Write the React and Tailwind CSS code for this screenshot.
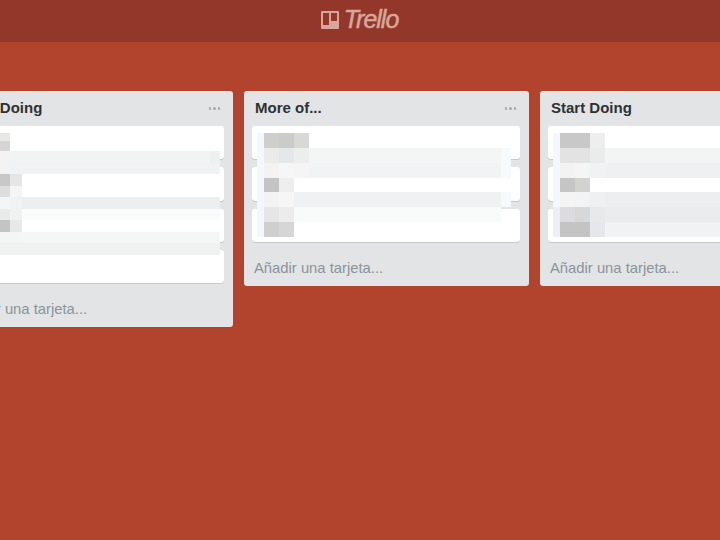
const keepRows = [
  ["h-[8px]", ["w-[10px] bg-[#e8e8e7]"]],
  ["h-[10px]", ["w-[10px] bg-[#d5d5d3]"]],
  ["h-[12px]", ["w-[10px] bg-[#f3f3f3]", "w-[200px] bg-[#f2f3f3]", "w-[10px] bg-[#eef0f0]"]],
  ["h-[11px]", ["w-[10px] bg-[#f3f3f3]", "w-[210px] bg-[#f0f2f3]"]],
  ["h-[12px]", ["w-[10px] bg-[#c8c8c8]", "w-[12px] bg-[#e5e5e5]"]],
  ["h-[11px]", ["w-[10px] bg-[#dddddd]", "w-[12px] bg-[#f5f5f5]"]],
  ["h-[12px]", ["w-[10px] bg-[#f3f5f7]", "w-[12px] bg-[#f0f2f4]", "w-[198px] bg-[#eceef0]"]],
  ["h-[11px]", ["w-[10px] bg-[#e9ebea]", "w-[12px] bg-[#f0f2f1]", "w-[198px] bg-[#fafbfb]"]],
  ["h-[12px]", ["w-[10px] bg-[#c4c4c4]", "w-[12px] bg-[#e8e8e8]"]],
  ["h-[11px]", ["w-[22px] bg-[#f4f5f5]", "w-[198px] bg-[#f5f6f6]"]],
  ["h-[12px]", ["w-[220px] bg-[#f0f1f1]"]],
];

const moreRows = [
  ["w-[7px] bg-[#f2f8fb]", "w-[15px] bg-[#cfcecd]", "w-[15px] bg-[#cbcbca]", "w-[15px] bg-[#d8d8d6]"],
  ["w-[7px] bg-[#f2f8fb]", "w-[15px] bg-[#ebebea]", "w-[15px] bg-[#e4e8ea]", "w-[15px] bg-[#ebeeed]", "w-[192px] bg-[#f4f5f5]", "w-[10px] bg-[#f5fafc]"],
  ["w-[7px] bg-[#f2f8fb]", "w-[15px] bg-[#f3f3f3]", "w-[15px] bg-[#f6f6f6]", "w-[15px] bg-[#f5f5f5]", "w-[192px] bg-[#f2f3f4]", "w-[10px] bg-[#f5fafc]"],
  ["w-[7px] bg-[#f2f8fb]", "w-[15px] bg-[#c4c4c4]", "w-[15px] bg-[#eeeeee]"],
  ["w-[7px] bg-[#f2f8fb]", "w-[15px] bg-[#f3f3f3]", "w-[15px] bg-[#f6f6f6]", "w-[207px] bg-[#eff1f2]", "w-[10px] bg-[#f5fafc]"],
  ["w-[7px] bg-[#f2f8fb]", "w-[15px] bg-[#e6e6e6]", "w-[15px] bg-[#ececec]", "w-[207px] bg-[#f9fafa]"],
  ["w-[7px] bg-[#f2f8fb]", "w-[15px] bg-[#cfcfcf]", "w-[15px] bg-[#d6d6d6]"],
];

const startRows = [
  ["w-[7px] bg-[#f2f8fb]", "w-[15px] bg-[#c9c8c8]", "w-[15px] bg-[#c9c8c8]", "w-[15px] bg-[#eeeeee]"],
  ["w-[7px] bg-[#f2f8fb]", "w-[15px] bg-[#e3e3e3]", "w-[15px] bg-[#e3e3e3]", "w-[15px] bg-[#eaecec]", "w-[130px] bg-[#f3f4f4]"],
  ["w-[7px] bg-[#f2f8fb]", "w-[15px] bg-[#f3f3f3]", "w-[15px] bg-[#f5f5f5]", "w-[15px] bg-[#f0f2f3]", "w-[130px] bg-[#eef0f1]"],
  ["w-[7px] bg-[#f2f8fb]", "w-[15px] bg-[#c5c5c5]", "w-[15px] bg-[#d2d2d0]"],
  ["w-[7px] bg-[#f2f8fb]", "w-[15px] bg-[#f4f4f4]", "w-[15px] bg-[#f2f3f4]", "w-[15px] bg-[#eff0f1]", "w-[130px] bg-[#eceeef]"],
  ["w-[7px] bg-[#eaf0f3]", "w-[15px] bg-[#dcdcde]", "w-[15px] bg-[#d8d8d8]", "w-[15px] bg-[#e8e9ea]", "w-[130px] bg-[#ebeced]"],
  ["w-[7px] bg-[#eaf0f3]", "w-[15px] bg-[#c4c4c4]", "w-[15px] bg-[#c4c4c4]", "w-[15px] bg-[#e4e8ea]", "w-[130px] bg-[#f0f2f3]"],
];

function List({ title, cards, children }) {
  return (
    <div className="relative w-[285px] shrink-0 self-start bg-[#e2e4e6] rounded-[3px] pl-2 pr-[9px]">
      <div className="h-[35px] flex items-center justify-between pl-[3px] pr-[4px]">
        <h2 className="text-[15px] font-bold text-[#2f3133]">{title}</h2>
        <span className="flex gap-[2px]">
          <i className="w-[2.5px] h-[2.5px] rounded-full bg-[#a3a8ab]"></i>
          <i className="w-[2.5px] h-[2.5px] rounded-full bg-[#a3a8ab]"></i>
          <i className="w-[2.5px] h-[2.5px] rounded-full bg-[#a3a8ab]"></i>
        </span>
      </div>
      <div className="flex flex-col gap-2">
        {Array.from({ length: cards }).map((_, i) => (
          <div key={i} className="h-[33.33px] bg-white rounded-[3px] shadow-[0_1px_0_#c4c9cc]"></div>
        ))}
      </div>
      <div className="h-[44px] flex items-center pl-[2px] pt-[8px] text-[14.8px] text-[#8b9499]">Añadir una tarjeta...</div>
      {children}
    </div>
  );
}

function Mosaic({ rows, className }) {
  return (
    <div className={`absolute top-[42px] flex flex-col ${className}`}>
      {rows.map((row, i) => (
        <div key={i} className="flex h-[14.86px]">
          {row.map((c, j) => (
            <div key={j} className={c}></div>
          ))}
        </div>
      ))}
    </div>
  );
}

export default function App() {
  return (
    <div className="w-[720px] h-[540px] overflow-hidden bg-[#b2442d] font-['Liberation_Sans',Arial,sans-serif]">
      {/* Header */}
      <header className="h-[42px] bg-[#93372a] flex items-center justify-center gap-[5px] pr-[1px]">
        <svg width="18" height="18" viewBox="0 0 18 18" className="shrink-0 -mt-[2px]">
          <path
            fillRule="evenodd"
            fill="#d8a69d"
            d="M1 0h16a1 1 0 0 1 1 1v16a1 1 0 0 1-1 1H1a1 1 0 0 1-1-1V1a1 1 0 0 1 1-1zM2 2v12h6V2zm8 0v8h6V2z"
          />
        </svg>
        <span className="italic text-[25px] leading-none tracking-[-1px] text-[#d8a69d] [-webkit-text-stroke:0.5px_#d8a69d] -mt-[3px]">Trello</span>
      </header>

      {/* Board */}
      <main className="flex gap-[11px] -ml-[52px] pt-[49px]">
        <List title="Keep Doing" cards={4}>
          <div className="absolute top-[42px] left-[52px] flex flex-col">
            {keepRows.map(([h, cells], i) => (
              <div key={i} className={`flex ${h}`}>
                {cells.map((c, j) => (
                  <div key={j} className={c}></div>
                ))}
              </div>
            ))}
          </div>
        </List>
        <List title="More of..." cards={3}>
          <Mosaic rows={moreRows} className="left-[12.5px]" />
        </List>
        <List title="Start Doing" cards={3}>
          <Mosaic rows={startRows} className="left-[12.5px]" />
        </List>
      </main>
    </div>
  );
}
